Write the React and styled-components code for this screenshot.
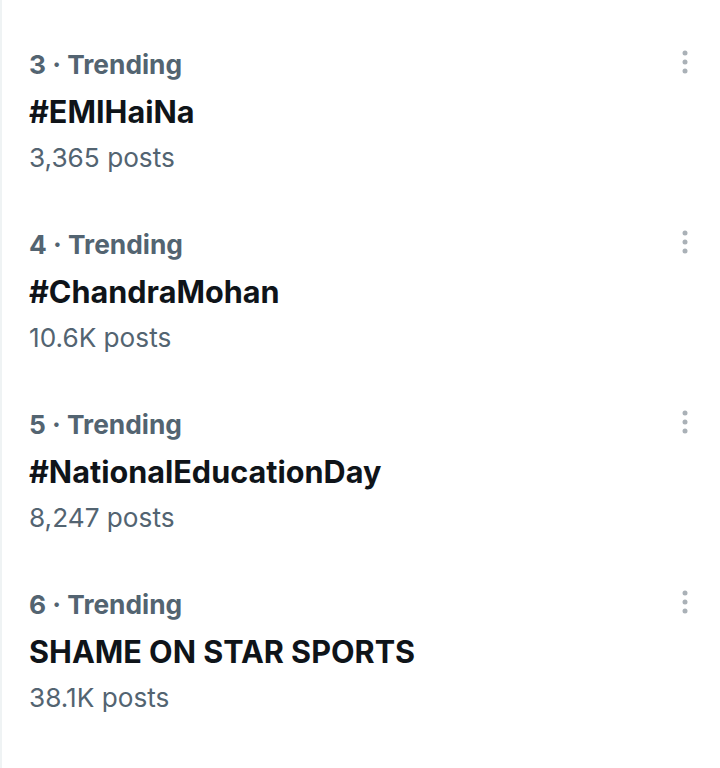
import React from "react";
import styled, { createGlobalStyle } from "styled-components";

const Global = createGlobalStyle`
  html, body { margin: 0; padding: 0; background: #ffffff; }
  body { font-family: Inter, "Noto Sans", "Liberation Sans", sans-serif; }
`;

const Page = styled.div`
  width: 720px;
  min-height: 768px;
  box-sizing: border-box;
  border-left: 2px solid #eff3f4;
  padding-top: 21px;
  display: flex;
  flex-direction: column;
`;

const Row = styled.div`
  display: flex;
  justify-content: space-between;
  align-items: flex-start;
  padding: 21px 30px 20px 27px;
`;

const Info = styled.div`
  display: flex;
  flex-direction: column;
`;

const Meta = styled.div`
  font-size: 26.3px;
  line-height: 46px;
  font-weight: 700;
  color: #536471;
`;

const Title = styled.div`
  font-size: 30.6px;
  line-height: 47px;
  font-weight: 700;
  color: #0f1419;
`;

const Count = styled.div`
  font-size: 26.2px;
  line-height: 46px;
  font-weight: 400;
  color: #536471;
`;

const More = styled.svg`
  width: 10px;
  height: 30px;
  margin-top: 5px;
  flex: none;
`;

const trends = [
  { rank: 3, title: "#EMIHaiNa", posts: "3,365 posts" },
  { rank: 4, title: "#ChandraMohan", posts: "10.6K posts" },
  { rank: 5, title: "#NationalEducationDay", posts: "8,247 posts" },
  { rank: 6, title: "SHAME ON STAR SPORTS", posts: "38.1K posts" },
];

export default function App() {
  return (
    <>
      <Global />
      <Page>
        {trends.map((t) => (
          <Row key={t.rank}>
            <Info>
              <Meta>{t.rank} · Trending</Meta>
              <Title>{t.title}</Title>
              <Count>{t.posts}</Count>
            </Info>
            <More viewBox="0 0 10 30">
              <circle cx="5" cy="6" r="2.5" fill="#aab1b7" />
              <circle cx="5" cy="15" r="2.5" fill="#aab1b7" />
              <circle cx="5" cy="24" r="2.5" fill="#aab1b7" />
            </More>
          </Row>
        ))}
      </Page>
    </>
  );
}
